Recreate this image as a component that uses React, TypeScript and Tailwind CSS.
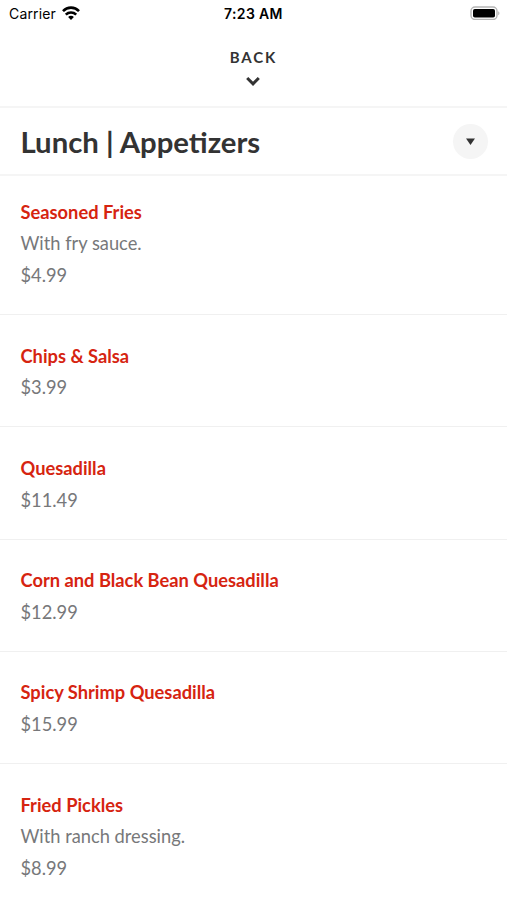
import { ReactNode } from 'react';

interface MenuItem {
    name: string;
    description?: string;
    price: string;
}

const ITEMS: MenuItem[] = [
    { name: 'Seasoned Fries', description: 'With fry sauce.', price: '$4.99' },
    { name: 'Chips & Salsa', price: '$3.99' },
    { name: 'Quesadilla', price: '$11.49' },
    { name: 'Corn and Black Bean Quesadilla', price: '$12.99' },
    { name: 'Spicy Shrimp Quesadilla', price: '$15.99' },
    { name: 'Fried Pickles', description: 'With ranch dressing.', price: '$8.99' },
];

function StatusBar() {
    return (
        <div className="grid h-7 grid-cols-3 items-center pr-[7px] pl-[9px] font-['Inter',sans-serif] text-[14px] text-black">
            <div className="flex items-center gap-1.5 pb-px">
                <span className="tracking-[0.15px]">Carrier</span>
                <svg className="mb-0.5" width="18" height="14" viewBox="0 0 18 14" fill="none" stroke="currentColor" strokeWidth="2.6">
                    <path d="M1 5.1C5.4.5 12.6.5 17 5.1" />
                    <path d="M3.8 8.6c2.9-2.8 7.5-2.8 10.4 0" />
                    <path d="M9 14 6.1 10.9c1.6-1.4 4.2-1.4 5.8 0Z" fill="currentColor" stroke="none" />
                </svg>
            </div>
            <span className="-ml-0.5 pb-px text-center font-semibold tracking-[0.35px]">7:23 AM</span>
            <svg className="mb-0.5 justify-self-end" width="30" height="14" viewBox="0 0 30 14">
                <rect x="1" y="1" width="26" height="12.5" rx="4" fill="none" stroke="#b5b5b5" strokeWidth="1.4" />
                <rect x="3" y="3" width="22" height="8.5" rx="1.8" fill="#000" />
                <path d="M28.2 5.2c1.7.8 1.7 3.3 0 4.1Z" fill="#b5b5b5" />
            </svg>
        </div>
    );
}

function Row({ children }: { children: ReactNode }) {
    return (
        <li className="border-b border-[#f0f0f0] px-[20.5px] pt-[25.6px] pb-[22.3px] text-[18.3px] leading-[31.7px] first:pt-[20.6px]">
            {children}
        </li>
    );
}

export default function App() {
    return (
        <div className="h-[900px] overflow-hidden bg-white font-['Lato',sans-serif] text-[#77787a]">
            <StatusBar />
            <button className="flex h-[80px] w-full flex-col items-center border-b-2 border-[#f5f5f5] pt-[18px] text-[#333]">
                <span className="text-[15px] leading-[22px] font-bold tracking-[1.9px]">BACK</span>
                <svg className="mt-[8px] mr-[1px]" width="14" height="10" viewBox="0 0 14 10" fill="none" stroke="currentColor" strokeWidth="3">
                    <path d="m1.2 2 5.8 5.8L12.8 2" />
                </svg>
            </button>

            <div className="flex h-[68px] items-center justify-between border-b-2 border-[#f5f5f5] pr-[19px] pl-[20.5px]">
                <h1 className="pt-0.5 text-[29.3px] leading-[42px] font-bold text-[#333]">Lunch | Appetizers</h1>
                <button className="flex size-[35px] items-center justify-center rounded-full bg-[#f5f5f5]">
                    <svg width="9" height="7" viewBox="0 0 9 7" fill="#333">
                        <path d="M0 .5h9L4.5 7Z" />
                    </svg>
                </button>
            </div>

            <ul>
                {ITEMS.map((item) => (
                    <Row key={item.name}>
                        <h2 className="font-bold text-[#d62410]">{item.name}</h2>
                        {item.description && <p>{item.description}</p>}
                        <p>{item.price}</p>
                    </Row>
                ))}
            </ul>
        </div>
    );
}
